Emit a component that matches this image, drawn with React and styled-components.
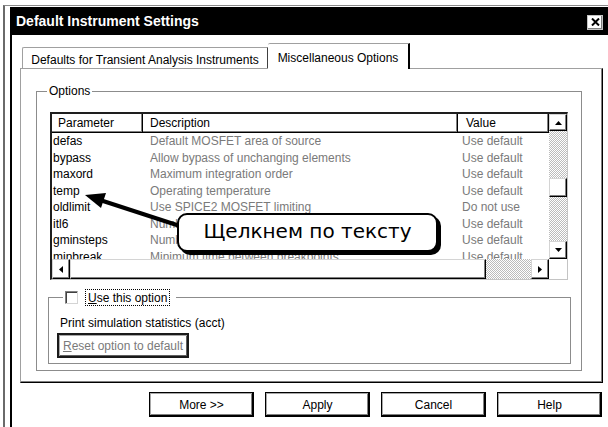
import styled, { createGlobalStyle } from "styled-components";

const GlobalStyle = createGlobalStyle`
  html, body {
    margin: 0;
    padding: 0;
    background: #fff;
    overflow: hidden;
  }
  body {
    width: 608px;
    height: 427px;
    font-family: "Liberation Sans", Arial, sans-serif;
    font-size: 12px;
    color: #000;
  }
`;

const COLS = "91px 315px 91px";
const CHECKER = "repeating-conic-gradient(#bcbcbc 0% 25%, #fff 0% 50%) 0 0 / 2px 2px";

const rows = [
  ["defas", "Default MOSFET area of source", "Use default"],
  ["bypass", "Allow bypass of unchanging elements", "Use default"],
  ["maxord", "Maximum integration order", "Use default"],
  ["temp", "Operating temperature", "Use default"],
  ["oldlimit", "Use SPICE2 MOSFET limiting", "Do not use"],
  ["itl6", "Number of steps in source stepping algorithm", "Use default"],
  ["gminsteps", "Number of Gmin steps", "Use default"],
  ["minbreak", "Minimum time between breakpoints", "Use default"],
];

// WINDOW FRAME
const Window = styled.div`
  margin: 5px 0 0 3px;
  width: 605px;
  height: 440px;
  box-sizing: border-box;
  border-top: 1px solid #8a8a8a;
  border-left: 2px solid #6a6a6a;
  padding: 1px 0 0 5px;
  display: flex;
  flex-direction: column;
`;
const TitleBar = styled.div`
  height: 28px;
  flex: none;
  background: #000;
  display: flex;
  align-items: center;
  justify-content: space-between;
  padding-left: 6px;
`;
const TitleText = styled.span`
  color: #fff;
  font-weight: bold;
  font-size: 14px;
`;
const CloseButton = styled.div`
  width: 16px;
  height: 15px;
  margin: 2px 5px 0 0;
  box-sizing: border-box;
  background: #fff;
  border: 1px solid #c4c4c4;
  box-shadow: inset -1px -1px 0 #808080;
  display: flex;
  align-items: center;
  justify-content: center;
`;
const Body = styled.div`
  flex: 1;
  border-left: 2px solid #000;
  padding: 8px 0 0 8px;
`;
// END WINDOW FRAME

// TABS
const TabRow = styled.div`
  display: flex;
  align-items: flex-end;
  height: 25px;
  padding-left: 2px;
`;
const Tab = styled.div`
  box-sizing: border-box;
  width: ${(p) => p.$w}px;
  height: ${(p) => (p.$active ? 26 : 21)}px;
  margin-bottom: ${(p) => (p.$active ? -1 : 0)}px;
  position: relative;
  z-index: ${(p) => (p.$active ? 2 : 1)};
  background: #fff;
  border-top: 1px solid #a0a0a0;
  border-left: ${(p) => (p.$active ? "none" : "1px solid #a0a0a0")};
  border-right: ${(p) => (p.$active ? "2px solid #000" : "1px solid #404040")};
  border-top-left-radius: 2px;
  display: flex;
  justify-content: center;
  padding-top: ${(p) => (p.$active ? 7 : 5)}px;
  white-space: nowrap;
`;
const Panel = styled.div`
  width: 583px;
  height: 315px;
  box-sizing: border-box;
  border-top: 1px solid #a0a0a0;
  border-left: 1px solid #a0a0a0;
  border-right: 1px solid #000;
  border-bottom: 1px solid #000;
  box-shadow: inset -1px -1px 0 #808080;
  padding: 15px 0 0 15px;
`;
// END TABS

// GROUP BOXES
const Group = styled.fieldset`
  margin: 0;
  width: 546px;
  box-sizing: border-box;
  border: 1px solid #8c8c8c;
  padding: 14px 0 6px 13px;
  display: flex;
  flex-direction: column;
  align-items: flex-start;
`;
const GroupLegend = styled.legend`
  padding: 0 2px;
  margin-left: -3px;
  line-height: 14px;
`;
const SubGroup = styled.fieldset`
  margin: 8px 0 0 -2px;
  width: 523px;
  box-sizing: border-box;
  border: 1px solid #8c8c8c;
  padding: 10px 0 5px 8px;
  display: flex;
  flex-direction: column;
  align-items: flex-start;
`;
const SubLegend = styled.legend`
  padding: 0 6px 0 2px;
  margin-left: 6px;
  height: 18px;
`;
const CheckRow = styled.span`
  display: inline-flex;
  align-items: center;
  gap: 7px;
  height: 18px;
`;
const CheckBox = styled.span`
  width: 13px;
  height: 13px;
  box-sizing: border-box;
  background: #fff;
  border: 1px solid;
  border-color: #808080 #d4d4d4 #d4d4d4 #808080;
  box-shadow: inset 1px 1px 0 #404040;
`;
const FocusLabel = styled.span`
  border: 1px dotted #000;
  padding: 1px 2px 0 2px;
  line-height: 14px;
`;
const Note = styled.div`
  margin-left: 3px;
  line-height: 14px;
`;
const ResetButton = styled.div`
  margin-top: 3px;
  width: 132px;
  height: 25px;
  box-sizing: border-box;
  border: 2px solid #1a1a1a;
  box-shadow: inset 1px 1px 0 #a8a8a8, inset -1px -1px 0 #606060;
  color: #7a7a7a;
  display: flex;
  align-items: center;
  justify-content: center;
  white-space: nowrap;
  u {
    text-decoration: underline;
  }
`;
// END GROUP BOXES

// LIST VIEW
const List = styled.div`
  position: relative;
  width: 518px;
  height: 168px;
  box-sizing: border-box;
  border-top: 2px solid #1e1e1e;
  border-left: 2px solid #1e1e1e;
  border-right: 1px solid #c4c4c4;
  border-bottom: 1px solid #c4c4c4;
  background: #fff;
  display: grid;
  grid-template-columns: 497px 18px;
  grid-template-rows: 145px 20px;
`;
const DataArea = styled.div`
  overflow: hidden;
`;
const HeaderRow = styled.div`
  display: grid;
  grid-template-columns: ${COLS};
  height: 19px;
`;
const HeaderCell = styled.div`
  box-sizing: border-box;
  border-right: 1px solid #000;
  border-bottom: 1px solid #000;
  box-shadow: inset -1px -1px 0 #808080, inset 1px 1px 0 #fff;
  padding-left: ${(p) => p.$pad}px;
  line-height: 18px;
  white-space: nowrap;
`;
const Row = styled.div`
  display: grid;
  grid-template-columns: ${COLS};
  height: 16.5px;
  line-height: 16.5px;
`;
const Cell = styled.div`
  padding-left: ${(p) => p.$pad}px;
  color: ${(p) => (p.$dim ? "#7a7a7a" : "#000")};
  white-space: nowrap;
  overflow: hidden;
`;
const VScroll = styled.div`
  display: flex;
  flex-direction: column;
`;
const HScroll = styled.div`
  display: flex;
`;
const ScrollPart = styled.div`
  flex: none;
  width: ${(p) => p.$w}px;
  height: ${(p) => p.$h}px;
  box-sizing: border-box;
  background: #fff;
  border: 1px solid;
  border-color: #d4d4d4 #000 #000 #d4d4d4;
  box-shadow: inset -1px -1px 0 #808080;
  display: flex;
  align-items: center;
  justify-content: center;
`;
const Track = styled.div`
  flex: ${(p) => (p.$size ? `0 0 ${p.$size}px` : "1")};
  background: ${CHECKER};
`;
const Corner = styled.div`
  background: #fff;
`;
// END LIST VIEW

// CALLOUT
const Callout = styled.div`
  position: absolute;
  left: 125px;
  top: 99px;
  width: 261px;
  height: 39px;
  box-sizing: border-box;
  border: 2px solid #000;
  border-radius: 10px;
  box-shadow: 3px 3px 0 #000;
  background: #fff;
  font-family: "DejaVu Sans", Verdana, sans-serif;
  font-size: 20px;
  display: flex;
  align-items: center;
  justify-content: center;
  padding-bottom: 3px;
  white-space: nowrap;
  z-index: 3;
`;
const Pointer = styled.svg`
  position: absolute;
  left: 28px;
  top: 71px;
  z-index: 2;
`;
// END CALLOUT

// BOTTOM BUTTONS
const ButtonRow = styled.div`
  width: 583px;
  display: flex;
  justify-content: flex-end;
  gap: 11px;
  padding-right: 1px;
  box-sizing: border-box;
  margin-top: 9px;
`;
const Button = styled.div`
  width: 105px;
  height: 25px;
  box-sizing: border-box;
  border: 1px solid #000;
  box-shadow: inset -1px -1px 0 #000, inset 1px 1px 0 #a8a8a8,
    inset -2px -2px 0 #808080;
  display: flex;
  align-items: center;
  justify-content: center;
`;
// END BOTTOM BUTTONS

const Tri = ({ dir }) => {
  const pts = {
    up: "0,4 7,4 3.5,0",
    down: "0,0 7,0 3.5,4",
    left: "4,0 4,7 0,3.5",
    right: "0,0 0,7 4,3.5",
  }[dir];
  const vertical = dir === "up" || dir === "down";
  return (
    <svg width={vertical ? 7 : 4} height={vertical ? 4 : 7}>
      <polygon points={pts} fill="#000" />
    </svg>
  );
};

const App = () => {
  return (
    <>
      <GlobalStyle />
      <Window>
        <TitleBar>
          <TitleText>Default Instrument Settings</TitleText>
          <CloseButton>
            <svg width="9" height="8" viewBox="0 0 9 8">
              <path d="M1 0.5 L8 7.5 M8 0.5 L1 7.5" stroke="#000" strokeWidth="2" />
            </svg>
          </CloseButton>
        </TitleBar>
        <Body>
          <TabRow>
            <Tab $w={246}>Defaults for Transient Analysis Instruments</Tab>
            <Tab $w={142} $active>
              Miscellaneous Options
            </Tab>
          </TabRow>
          <Panel>
            <Group>
              <GroupLegend>Options</GroupLegend>
              <List>
                <DataArea>
                  <HeaderRow>
                    <HeaderCell $pad={6}>Parameter</HeaderCell>
                    <HeaderCell $pad={7}>Description</HeaderCell>
                    <HeaderCell $pad={8}>Value</HeaderCell>
                  </HeaderRow>
                  {rows.map(([param, desc, value]) => (
                    <Row key={param}>
                      <Cell $pad={1}>{param}</Cell>
                      <Cell $pad={7} $dim>
                        {desc}
                      </Cell>
                      <Cell $pad={4} $dim>
                        {value}
                      </Cell>
                    </Row>
                  ))}
                </DataArea>
                <VScroll>
                  <ScrollPart $w={18} $h={17}>
                    <Tri dir="up" />
                  </ScrollPart>
                  <Track $size={47} />
                  <ScrollPart $w={18} $h={19} />
                  <Track />
                  <ScrollPart $w={18} $h={18}>
                    <Tri dir="down" />
                  </ScrollPart>
                </VScroll>
                <HScroll>
                  <ScrollPart $w={18} $h={20}>
                    <Tri dir="left" />
                  </ScrollPart>
                  <ScrollPart $w={416} $h={20} />
                  <Track />
                  <ScrollPart $w={18} $h={20}>
                    <Tri dir="right" />
                  </ScrollPart>
                </HScroll>
                <Corner />
                <Pointer width="110" height="50" viewBox="0 0 110 50">
                  <line x1="20" y1="15" x2="106" y2="43" stroke="#000" strokeWidth="4" />
                  <polygon points="5,10 26,8 21,23" fill="#000" />
                </Pointer>
                <Callout>Щелкнем по тексту</Callout>
              </List>
              <SubGroup>
                <SubLegend>
                  <CheckRow>
                    <CheckBox />
                    <FocusLabel>
                      <u>U</u>se this option
                    </FocusLabel>
                  </CheckRow>
                </SubLegend>
                <Note>Print simulation statistics (acct)</Note>
                <ResetButton>
                  <span>
                    <u>R</u>eset option to default
                  </span>
                </ResetButton>
              </SubGroup>
            </Group>
          </Panel>
          <ButtonRow>
            <Button>More &gt;&gt;</Button>
            <Button>Apply</Button>
            <Button>Cancel</Button>
            <Button>Help</Button>
          </ButtonRow>
        </Body>
      </Window>
    </>
  );
};

export default App;
